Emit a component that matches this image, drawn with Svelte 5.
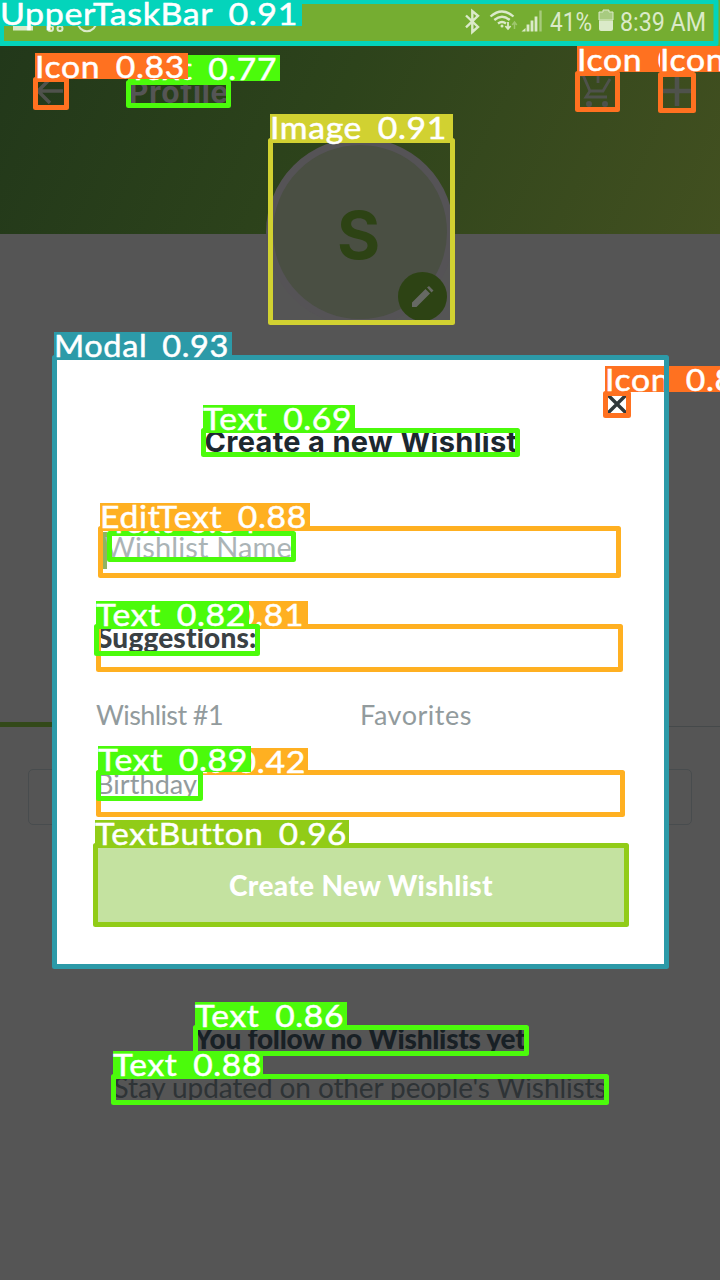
<script>
  // Spreads the letters of a line so that it takes the given width.
  function fit(node, width) {
    const count = node.textContent.length;
    const natural = node.getBoundingClientRect().width;
    node.style.letterSpacing = `${(width - natural) / count}px`;
  }

  const green = '#4bfb0b';
  const orange = '#ff7120';
  const amber = '#ffb021';
  const teal = '#2c9aa8';

  // Frames: outer edges x1,y1,x2,y2. Tags: left, top, right edge, text width.
  const marks = [
    { c: green, b: [107, 531, 296, 562], l: [109, 508, 258], t: 'Text 0.84', w: 148 },
    { c: amber, b: [96, 624, 623, 672], l: [98, 601, 308], t: 'EditText 0.81', w: 206 },
    { c: amber, b: [96, 770, 625, 817], l: [98, 748, 308], t: 'EditText 0.42', w: 208 },
    { c: green, b: [126, 80, 231, 108], l: [128, 55, 280], t: 'Text 0.77', w: 149 },
    { c: orange, b: [33, 77, 69, 110], l: [35, 53, 188], t: 'Icon 0.83', w: 150 },
    { c: '#d1d131', b: [268, 138, 455, 325], l: [270, 114, 453], t: 'Image 0.91', w: 177 },
    { c: green, b: [201, 428, 520, 457], l: [203, 405, 355], t: 'Text 0.69', w: 149 },
    { c: amber, b: [98, 526, 621, 578], l: [100, 503, 310], t: 'EditText 0.88', w: 207 },
    { c: green, b: [94, 624, 260, 656], l: [96, 601, 249], t: 'Text 0.82', w: 150 },
    { c: green, b: [96, 770, 203, 801], l: [98, 746, 251], t: 'Text 0.89', w: 150 },
    { c: orange, b: [603, 391, 631, 418], l: [605, 366, 759], t: 'Icon 0.86', w: 150 },
    { c: teal, b: [52, 355, 669, 969], l: [54, 332, 232], t: 'Modal 0.93', w: 175 },
    { c: '#91cc17', b: [93, 843, 629, 927], l: [95, 820, 349], t: 'TextButton 0.96', w: 252 },
    { c: green, b: [193, 1025, 529, 1056], l: [195, 1002, 347], t: 'Text 0.86', w: 149 },
    { c: green, b: [111, 1074, 609, 1105], l: [113, 1051, 263], t: 'Text 0.88', w: 149 },
    { c: orange, b: [575, 71, 620, 112], l: [577, 46, 731], t: 'Icon 0.87', w: 150 },
    { c: orange, b: [658, 72, 696, 113], l: [660, 46, 812], t: 'Icon 0.85', w: 150 },
    { c: '#04d4bb', b: [-1, -1, 718.5, 46], l: [0, 0, 302], t: 'UpperTaskBar 0.91', w: 298 }
  ];
</script>

<main class="screen">
  <header class="status">
    <svg width="110" height="46" viewBox="0 0 110 46" fill="none" stroke="#dbeac9" stroke-width="2">
      <path d="M13 22h20v8.500H13z" fill="#dbeac9" stroke="none" />
      <circle cx="50.5" cy="28.5" r="2.5" /><circle cx="60" cy="28.5" r="2.5" />
      <circle cx="87" cy="22" r="9.3" />
    </svg>
    <svg width="256" height="46" viewBox="464 0 256 46" fill="none" stroke="#dbeac9" stroke-width="2.4">
      <path d="M466 15.500l12 11.500-5.700 5V11l5.700 4.800-12 11.500" />
      <g stroke-width="2.3">
        <path d="M490.500 16.500q11.500-10 23 0M494.300 20q7.700-6.500 15.400 0M498 23.500q4-3 8 0" />
        <circle cx="502" cy="26" r="1.500" fill="#dbeac9" stroke="none" />
        <path d="M508 22v6m-2.600-2l2.600 3 2.600-3" stroke-width="1.800" />
        <path d="M514.500 29v-6m-2.300 2l2.300-3 2.300 3" stroke-width="1.500" opacity=".4" />
      </g>
      <path d="M521.500 31.500l4-3.500v3.500z" fill="#dbeac9" stroke="none" />
      <path d="M528 31.500v-7M532 31.500v-11M536 31.500v-15" stroke-width="2.800" />
      <path d="M540.500 31.500v-21" stroke-width="2.400" opacity=".5" />
      <path d="M599 12h4v-2h6v2h4v8h-14z" fill="#a8cb80" stroke="#dbeac9" stroke-width="1" />
      <path d="M599 20.500h14V29q0 2-2 2h-10q-2 0-2-2z" fill="#dbeac9" stroke="none" />
      <g fill="#dbeac9" stroke="none" font-family="Roboto, sans-serif" font-size="25.500">
        <text x="550" y="31" textLength="42" lengthAdjust="spacingAndGlyphs">41%</text>
        <text x="620" y="31" textLength="86" lengthAdjust="spacingAndGlyphs">8:39 AM</text>
      </g>
    </svg>
  </header>

  <section class="hero">
    <nav>
      <svg width="36" height="36" viewBox="0 0 36 36" fill="none" stroke="#4f524c" stroke-width="3.500"><path d="M30 17H6M17 5L5 17l12 12" /></svg>
      <h1><span use:fit={100}>Profile</span></h1>
      <svg class="cart" width="40" height="40" viewBox="0 0 40 40" fill="none" stroke="#4f524c" stroke-width="2.800">
        <path d="M1 3h4l7 16h13l7-12M12 19l-4 6h21M20 1v10" />
        <circle cx="11" cy="32" r="1.600" /><circle cx="27" cy="32" r="1.600" />
      </svg>
      <svg class="plus" width="30" height="36" viewBox="0 0 30 36" stroke="#4f524c" stroke-width="4.600"><path d="M1 17h28M15 3v29" /></svg>
    </nav>
    <div class="avatar">
      <span>S</span>
      <svg class="edit" width="49" height="49" viewBox="0 0 49 49">
        <circle cx="24.500" cy="24.500" r="24.500" fill="#2d4314" />
        <path d="M14 30.500L27.500 17l4.500 4.500-13.500 13.500h-4.500zM29 15.500l2-1.500 4.500 4.500-2 2z" fill="#666963" />
      </svg>
    </div>
  </section>

  <div class="tabs"><i></i><i></i></div>
  <div class="card"></div>
  <footer>
    <strong><span use:fit={331}>You follow no Wishlists yet</span></strong>
    <p><span use:fit={493}>Stay updated on other people's Wishlists</span></p>
  </footer>

  <section class="modal">
    <div class="close">
      <svg width="20" height="20" viewBox="0 0 20 20" stroke="#30383a" stroke-width="3.400"><path d="M1 1l18 18M19 1l-18 18" /></svg>
    </div>
    <h2><span use:fit={313}>Create a new Wishlist</span></h2>
    <div class="field"><i></i><span use:fit={187}>Wishlist Name</span></div>
    <h3><span use:fit={160}>Suggestions:</span></h3>
    <div class="options">
      <div><span use:fit={127}>Wishlist #1</span></div>
      <div><span use:fit={112}>Favorites</span></div>
      <div><span use:fit={101}>Birthday</span></div>
    </div>
    <button><span use:fit={264}>Create New Wishlist</span></button>
  </section>

  <svg class="marks" width="720" height="1280" viewBox="0 0 720 1280">
    {#each marks as m}
      <rect x={m.b[0] + 2.5} y={m.b[1] + 2.5} width={m.b[2] - m.b[0] - 5} height={m.b[3] - m.b[1] - 5} fill="none" stroke={m.c} stroke-width="5" stroke-linejoin="round" />
      <rect x={m.l[0]} y={m.l[1]} width={m.l[2] - m.l[0]} height="26" fill={m.c} />
      <text x={m.l[0]} y={m.l[1] + 24.5} textLength={m.w} lengthAdjust="spacingAndGlyphs">{m.t}</text>
    {/each}
  </svg>
</main>

<style>
  :global(body) { margin: 0; }
  .screen {
    position: relative; width: 720px; height: 1280px; overflow: hidden;
    background: #555; font: 27px/30px Lato, sans-serif;
    display: flex; flex-direction: column;
  }
  h1, h2, h3, p { margin: 0; }
  span { white-space: nowrap; }
  svg { display: block; flex: none; }
  .status { height: 46px; display: flex; justify-content: space-between; background: #75ad31; }
  .hero {
    height: 188px; display: flex; flex-direction: column; align-items: center;
    background: linear-gradient(115deg, #22381a 0%, #2d431b 45%, #425020 100%);
  }
  nav { flex: none; width: 660px; height: 92px; display: flex; align-items: center; box-sizing: border-box; padding-left: 3px; }
  nav h1 { margin-left: 60px; color: #555; font: 700 30px/30px Inter, sans-serif; flex: 1; }
  .cart { margin-right: 44px; }
  .plus { margin-right: -2px; }
  .avatar {
    flex: none; position: relative; width: 174px; height: 174px; border: 7px solid #555356;
    border-radius: 50%; background: #4a4f43; display: flex; align-items: center; justify-content: center;
  }
  .avatar span { font: 700 66px/80px Inter, sans-serif; color: #2d4314; margin-right: 3px; margin-bottom: -5px; }
  .edit { position: absolute; left: 125px; top: 127px; }
  .tabs { margin-top: 488px; height: 5px; display: flex; align-items: flex-end; }
  .tabs i { flex: 1; height: 5px; background: #334919; }
  .tabs i + i { height: 1px; background: #45494a; }
  .card { margin: 42px 28px 0; height: 56px; box-sizing: border-box; border: 1.5px solid #484c4e; border-radius: 5px; }
  footer { margin-top: 198px; text-align: center; color: #2e3336; }
  footer strong { display: block; color: #182025; font-size: 28px; font-weight: 900; margin-bottom: 19px; }
  footer p { font-size: 28px; }
  .modal {
    position: absolute; left: 54px; top: 357px; width: 613px; height: 610px; box-sizing: border-box;
    padding: 0 40px 0 41px; background: #fff; display: flex; flex-direction: column;
  }
  .close { height: 33px; padding-top: 37px; display: flex; justify-content: flex-end; }
  h2 { font: 700 29px/30px Inter, sans-serif; color: #1d282f; text-align: center; }
  .field { display: flex; margin: 75px 0 0 8px; height: 37px; color: #abb4b6; font-size: 29px; }
  .field i { width: 4px; height: 37px; background: #8fb363; margin-right: -2px; }
  h3 { margin: 53px 0 0 2px; font-size: 28px; line-height: 30px; font-weight: 900; color: #3a4144; }
  .options { display: grid; grid-template-columns: 264px 1fr; row-gap: 39px; margin: 48px 0 0 1px; color: #929b9d; }
  button { margin-top: 46px; height: 80px; border: 0; padding: 0; background: #c4e2a0; color: #fff; font: 900 28px/30px Lato, sans-serif; }
  .marks { position: absolute; left: 0; top: 0; }
  .marks text { fill: #fff; font: 400 31.500px Lato, sans-serif; word-spacing: 6px; letter-spacing: .6px; stroke: #fff; stroke-width: .5px; }
</style>
